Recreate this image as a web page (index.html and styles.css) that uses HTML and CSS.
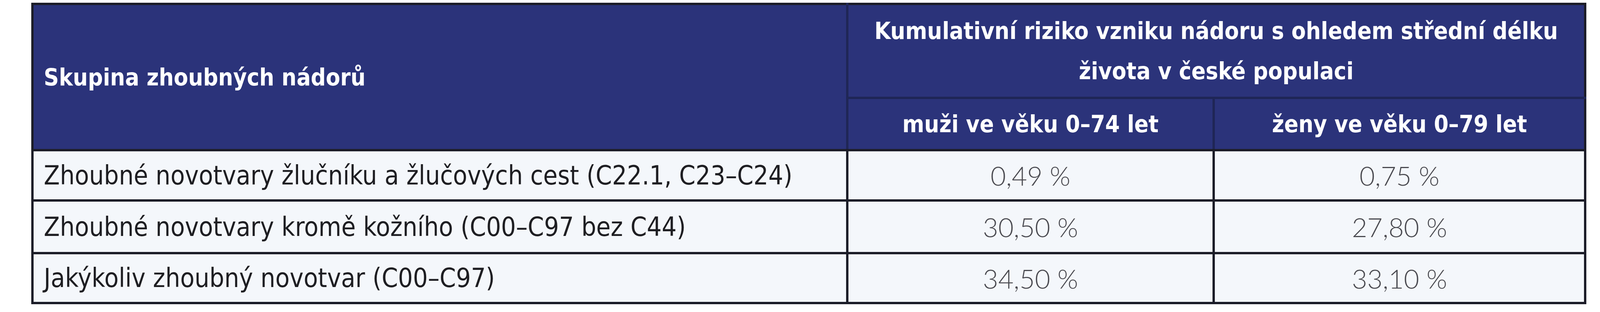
FILE: index.html
```html
<!DOCTYPE html>
<html lang="cs">
<head>
<meta charset="utf-8">
<title>Kumulativní riziko</title>
<link rel="stylesheet" href="styles.css">
</head>
<body>
<table class="risk">
  <colgroup>
    <col class="c1">
    <col class="c2">
    <col class="c3">
  </colgroup>
  <thead>
    <tr class="h1">
      <th rowspan="2" class="group">Skupina zhoubných nádorů</th>
      <th colspan="2" class="main">Kumulativní riziko vzniku nádoru s ohledem střední délku<br>života v české populaci</th>
    </tr>
    <tr class="h2">
      <th class="sub">muži ve věku 0–74 let</th>
      <th class="sub">ženy ve věku 0–79 let</th>
    </tr>
  </thead>
  <tbody>
    <tr class="r1">
      <td class="name">Zhoubné novotvary žlučníku a žlučových cest (C22.1, C23–C24)</td>
      <td class="val">0,49 %</td>
      <td class="val">0,75 %</td>
    </tr>
    <tr class="r2">
      <td class="name">Zhoubné novotvary kromě kožního (C00–C97 bez C44)</td>
      <td class="val">30,50 %</td>
      <td class="val">27,80 %</td>
    </tr>
    <tr class="r3">
      <td class="name">Jakýkoliv zhoubný novotvar (C00–C97)</td>
      <td class="val">34,50 %</td>
      <td class="val">33,10 %</td>
    </tr>
  </tbody>
</table>
</body>
</html>
```
FILE: styles.css
```css
html, body {
  margin: 0;
  padding: 0;
  background: #ffffff;
  overflow: hidden;
}

body {
  padding: 7px 0 0 1.958vw;
  font-family: "DejaVu Sans Condensed", "Liberation Sans", sans-serif;
}

.risk {
  border-collapse: collapse;
  table-layout: fixed;
  width: 97.19vw;
  border: 6px solid #1c1d28;
}

.c1 { width: 52.47%; }
.c2 { width: 23.61%; }
.c3 { width: 23.92%; }

.risk th {
  background: #2b337a;
  color: #ffffff;
  font-weight: 700;
  font-size: 1.46vw;
  padding: 0;
  white-space: nowrap;
}

.h1 { height: 241px; }
.h2 { height: 134px; }
.r1 { height: 129px; }
.r2 { height: 135px; }
.r3 { height: 128px; }

.group {
  text-align: left;
  padding-left: 0.633vw !important;
  border-right: 6px solid #1f2656;
  border-bottom: 6px solid #1c1d28;
}

.main {
  text-align: center;
  line-height: 103px;
  border-bottom: 6px solid #1f2656;
}

.sub {
  text-align: center;
  border-bottom: 6px solid #1c1d28;
}

.h2 .sub:first-child {
  border-right: 6px solid #1f2656;
}

.risk td {
  background: #f4f7fb;
  padding: 0;
  border-bottom: 6px solid #1c1d28;
  border-right: 6px solid #1c1d28;
}

.name {
  font-size: 1.63vw;
  color: #1e1e22;
  padding-left: 0.633vw !important;
  white-space: nowrap;
}

.val {
  font-family: Lato, "Liberation Sans", sans-serif;
  font-weight: 300;
  font-size: 1.66vw;
  color: #4a4a50;
  text-align: center;
}
```
